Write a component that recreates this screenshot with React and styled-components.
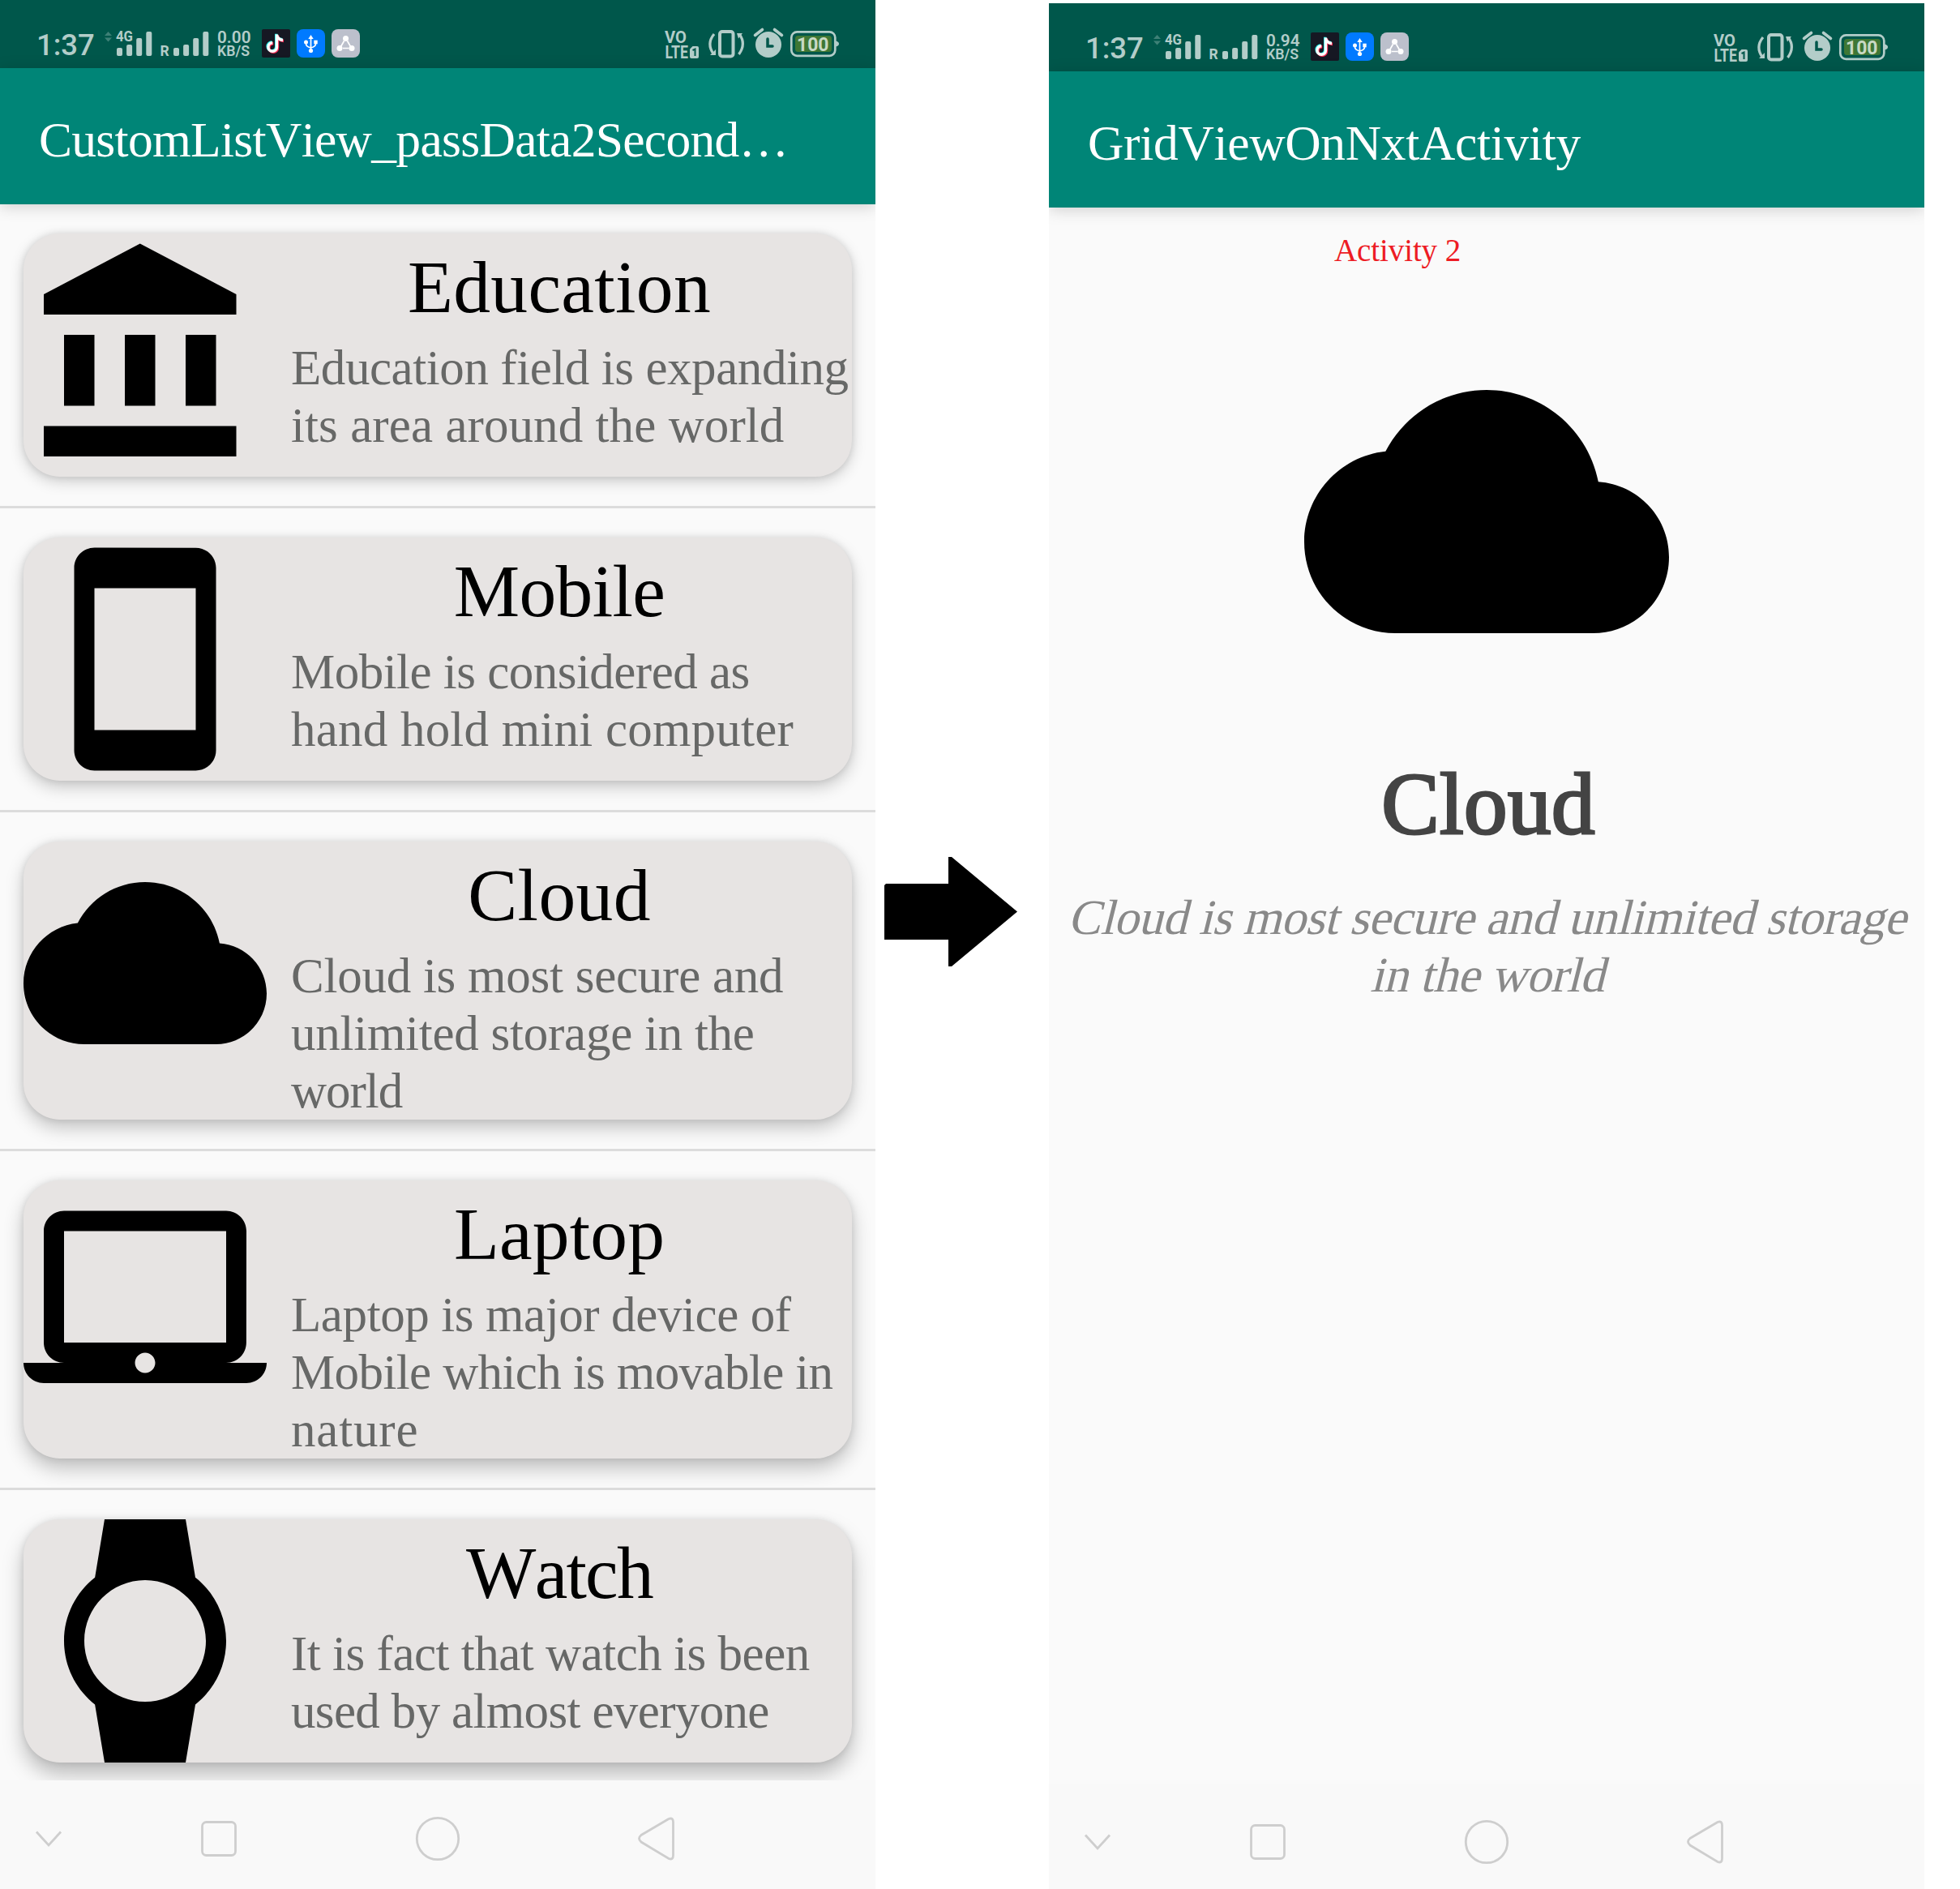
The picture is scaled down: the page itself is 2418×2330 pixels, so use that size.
import React, { useLayoutEffect, useRef, useState } from "react";
import styled, { createGlobalStyle } from "styled-components";

const GlobalStyle = createGlobalStyle`
  *, *::before, *::after { box-sizing: border-box; }
  html, body { margin: 0; padding: 0; background: #fff; }
  body { overflow: hidden; }
  svg { display: block; flex: none; }
`;

const serif = `"Liberation Serif", "Times New Roman", serif`;
const tint = "#b3cdc9";

const Board = styled.main`
  display: flex;
  width: 2418px;
  height: 2330px;
  overflow: hidden;
  background: #fff;
  font-family: ${serif};
`;

const Phone = styled.section`
  display: flex;
  flex-direction: column;
  flex: none;
  width: 1080px;
  height: 2330px;
  margin-top: ${(p) => p.$top || 0}px;
  background: #fafafa;
  overflow: hidden;
`;

const Between = styled.div`
  display: flex;
  flex: none;
  width: 214px;
  padding: 1056px 0 0 11px;
`;

const StatusBar = styled.header`
  display: flex;
  flex: none;
  align-items: flex-start;
  justify-content: space-between;
  height: 84px;
  padding: 30px 45px 0;
  background: #00574b;
  font-family: Roboto, sans-serif;
`;

const StatusGroup = styled.div`
  display: flex;
`;

const Clock = styled.div`
  width: 82px;
  padding-top: 5px;
  color: ${tint};
  font-size: 36.5px;
  font-weight: 500;
  line-height: 42px;
`;

const AppIcons = styled.div`
  display: flex;
  gap: 8px;
  margin-left: 12px;
  padding-top: 6px;
`;

const AppBadge = styled.div`
  width: 35px;
  height: 35px;
  border-radius: ${(p) => p.$radius}px;
  background: ${(p) => p.$color};
`;

const AppBar = styled.div`
  position: relative;
  z-index: 1;
  display: flex;
  flex: none;
  align-items: center;
  height: 168px;
  padding: 8px 48px 0;
  background: #008577;
  color: #fff;
  font-size: 61.5px;
  box-shadow: 0 3px 18px rgba(0, 0, 0, 0.17);
`;

const List = styled.div`
  display: flex;
  flex-direction: column;
  flex: none;
  height: 1944px;
  overflow: hidden;
`;

const ListItem = styled.div`
  flex: none;
  padding: 36px 29px;
  border-bottom: 3px solid #dcdcdc;
`;

const Card = styled.article`
  display: flex;
  min-height: 300px;
  border-radius: 45px;
  background: #e7e4e3;
  box-shadow:
    0 0 8px rgba(0, 0, 0, 0.1),
    0 ${(p) => p.$depth}px ${(p) => p.$depth + 12}px rgba(0, 0, 0, ${(p) => 0.12 + p.$depth * 0.01});
`;

const Picture = styled.svg`
  width: ${(p) => p.$size}px;
  height: ${(p) => p.$size}px;
  fill: #000;
`;

const CardText = styled.div`
  display: flex;
  flex-direction: column;
  flex: 1;
  min-width: 0;
  padding-top: 2px;
`;

const CardTitle = styled.h2`
  margin: 0;
  color: #000;
  font-size: 91.5px;
  font-weight: 400;
  line-height: 128px;
  text-align: center;
`;

const CardDescription = styled.p`
  display: flex;
  flex-direction: column;
  align-items: flex-start;
  margin: 0;
  padding-left: 30px;
  color: #676867;
  font-size: 61px;
  line-height: 71px;
`;

const NavBar = styled.nav`
  display: flex;
  flex: none;
  height: 134px;
  background: #f9f9f9;
`;

const Detail = styled.div`
  display: flex;
  flex-direction: column;
  align-items: center;
  flex: none;
  height: 1944px;
  padding-top: 31px;
`;

const DetailLabel = styled.div`
  align-self: flex-start;
  margin: 0 0 75px 352px;
  color: #ed1c24;
  font-size: 39px;
  line-height: 44px;
`;

const DetailTitle = styled.h1`
  margin: 71px 0 39px;
  padding-left: 4px;
  color: #444;
  font-size: 107px;
  font-weight: 400;
  line-height: 130px;
  -webkit-text-stroke: 3px #444;
`;

const DetailDescription = styled.p`
  display: flex;
  flex-direction: column;
  align-items: center;
  margin: 0;
  color: #898989;
  font-size: 61px;
  line-height: 71px;
`;

const Slanted = styled.span`
  display: block;
  transform: skewX(-14deg);
  transform-origin: 50% 79%;
`;

const Line = styled.span`
  display: inline-block;
  white-space: nowrap;
  font-kerning: none;
  font-variant-ligatures: none;
`;

/* Tracks a line of text so that it takes up the given width. */
function Fit({ width, children }) {
  const ref = useRef(null);
  const [spacing, setSpacing] = useState(0);
  useLayoutEffect(() => {
    const natural = ref.current.offsetWidth;
    setSpacing((width - natural) / children.length);
  }, [width, children]);
  return (
    <Line ref={ref} style={{ letterSpacing: `${spacing}px` }}>
      {children}
    </Line>
  );
}

const glyphs = {
  bank: "M4 10v7h3v-7H4zm6 0v7h3v-7h-3zM2 22h19v-3H2v3zm14-12v7h3v-7h-3zm-4.5-9L2 6v2h19V6l-9.5-5z",
  phone:
    "M17 1.01L7 1c-1.1 0-2 .9-2 2v18c0 1.1.9 2 2 2h10c1.1 0 2-.9 2-2V3c0-1.1-.9-1.99-2-1.99zM17 19H7V5h10v14z",
  cloud:
    "M19.35 10.04C18.67 6.59 15.64 4 12 4 9.11 4 6.6 5.64 5.35 8.04 2.34 8.36 0 10.91 0 14c0 3.31 2.69 6 6 6h13c2.76 0 5-2.24 5-5 0-2.64-2.05-4.78-4.65-4.96z",
  laptop:
    "M20 18c1.1 0 1.99-.9 1.99-2L22 5c0-1.1-.9-2-2-2H4c-1.1 0-2 .9-2 2v11c0 1.1.9 2 2 2H0c0 1.1.9 2 2 2h20c1.1 0 2-.9 2-2h-4zM4 5h16v11H4V5zm8 14c-.55 0-1-.45-1-1s.45-1 1-1 1 .45 1 1-.45 1-1 1z",
  watch:
    "M20 12c0-2.54-1.19-4.81-3.04-6.27L16 0H8l-.95 5.73C5.19 7.19 4 9.45 4 12s1.19 4.81 3.05 6.27L8 24h8l.96-5.73C18.81 16.81 20 14.54 20 12zM6 12c0-3.31 2.69-6 6-6s6 2.69 6 6-2.69 6-6 6-6-2.69-6-6z",
};

const items = [
  {
    icon: "bank", title: "Education", width: 374, depth: 6,
    lines: [["Education field is expanding", 688], ["its area around the world", 608]],
  },
  {
    icon: "phone", title: "Mobile", width: 260, depth: 8,
    lines: [["Mobile is considered as", 566], ["hand hold mini computer", 620]],
  },
  {
    icon: "cloud", title: "Cloud", width: 226, depth: 10,
    lines: [["Cloud is most secure and", 607], ["unlimited storage in the", 572], ["world", 137]],
  },
  {
    icon: "laptop", title: "Laptop", width: 260, depth: 12,
    lines: [["Laptop is major device of", 617], ["Mobile which is movable in", 668], ["nature", 157]],
  },
  {
    icon: "watch", title: "Watch", width: 230, depth: 14,
    lines: [["It is fact that watch is been", 640], ["used by almost everyone", 590]],
  },
];

function Glyph({ name, size }) {
  return (
    <Picture viewBox="0 0 24 24" $size={size}>
      <path d={glyphs[name]} />
    </Picture>
  );
}

/* Signal strengths of both SIMs and the current network speed. */
function Signals({ speed }) {
  const heights = [10, 14, 22, 30];
  return (
    <svg width="184" height="48" viewBox="127 30 184 48" fill={tint}>
      <path d="M129 44l4.500-5 4.500 5zM129 46.500h9l-4.500 5z" opacity="0.35" />
      <text x="143" y="51.300" fontSize="17.500" fontWeight="700" textLength="21" lengthAdjust="spacingAndGlyphs">4G</text>
      {heights.map((h, i) => (
        <rect key={i} x={144 + i * 12.1} y={69 - h} width="7" height={h} rx="2" />
      ))}
      <text x="197.500" y="68.700" fontSize="17.500" fontWeight="700">R</text>
      {heights.map((h, i) => (
        <rect key={i} x={214 + i * 12.1} y={69 - h} width="7" height={h} rx="2" />
      ))}
      <text x="268" y="52.700" fontSize="20.500" fontWeight="600" textLength="41.500" lengthAdjust="spacingAndGlyphs">{speed}</text>
      <text x="268" y="68.900" fontSize="18" fontWeight="600" textLength="40" lengthAdjust="spacingAndGlyphs">KB/S</text>
    </svg>
  );
}

function Indicators() {
  return (
    <svg width="217" height="48" viewBox="818 30 217 48" fill={tint}>
      <text x="820" y="53" fontSize="21" fontWeight="700" textLength="27" lengthAdjust="spacingAndGlyphs">VO</text>
      <text x="820.500" y="71.500" fontSize="21.500" fontWeight="700" textLength="28.500" lengthAdjust="spacingAndGlyphs">LTE</text>
      <path d="M854.500 57H860a2 2 0 0 1 2 2v11a2 2 0 0 1-2 2h-7a2 2 0 0 1-2-2v-9.500z" />
      <path d="M854.500 62l3-1.500V69" fill="none" stroke="#00574b" strokeWidth="2" />
      <rect x="888" y="39" width="16.500" height="30.500" rx="3" fill="none" stroke={tint} strokeWidth="4" />
      <g fill="none" stroke={tint} strokeWidth="3.200">
        <path d="M881 42Q871 54 880.500 67" />
        <path d="M911.500 67Q921 54 912 42" />
      </g>
      <path d="M876 68h7v-7zM909 41h7l-5 6.500z" />
      <circle cx="948" cy="55" r="16" />
      <path d="M931.500 43.500L940.500 36.500M964.500 43.500L955.500 36.500" stroke={tint} strokeWidth="3.600" strokeLinecap="round" />
      <path d="M947 48v9h6" fill="none" stroke="#00574b" strokeWidth="3.500" strokeLinecap="round" />
      <rect x="976.300" y="39.300" width="54" height="29.500" rx="7" fill="none" stroke={tint} strokeWidth="2.700" />
      <path d="M1031 50.500q4 1 4 3.500t-4 3.500z" />
      <rect x="981" y="44" width="45" height="20" rx="3.500" fill="#3f7735" />
      <text x="983" y="62.800" fontSize="24" fontWeight="700" fill="#c8d9c4" textLength="39.500" lengthAdjust="spacingAndGlyphs">100</text>
    </svg>
  );
}

const note = "M18.500 6.500V22a5.300 5.300 0 1 1-5.300-5.300M18.500 7q1 6 7.500 6.500";

function Status({ speed }) {
  return (
    <StatusBar>
      <StatusGroup>
        <Clock>1:37</Clock>
        <Signals speed={speed} />
        <AppIcons>
          <AppBadge $color="#161823" $radius={2}>
            <svg width="35" height="35" fill="none" strokeWidth="3.400">
              <path d={note} stroke="#25f4ee" transform="translate(-.8 -.7)" />
              <path d={note} stroke="#fe2c55" transform="translate(1 1)" />
              <path d={note} stroke="#fff" />
            </svg>
          </AppBadge>
          <AppBadge $color="#007aff" $radius={8}>
            <svg width="35" height="35" fill="#fff">
              <path d="M17.500 10v16M11.500 16.500v1.500q0 3.500 6 5 6-1.500 6-5v-1.500" fill="none" stroke="#fff" strokeWidth="1.700" />
              <path d="M14.300 12l3.200-5 3.200 5z" />
              <circle cx="11.500" cy="16" r="2.500" />
              <rect x="21.300" y="13.700" width="4.400" height="4.600" />
              <circle cx="17.500" cy="26.500" r="2.600" />
            </svg>
          </AppBadge>
          <AppBadge $color="#bcc0cc" $radius={8}>
            <svg width="35" height="35" fill="#fff">
              <path d="M15.500 14.500l-4 7M19.500 14.500l4 7M14 23.500h7.500" stroke="#fff" strokeWidth="1.700" />
              <circle cx="17.500" cy="11.500" r="3.500" />
              <circle cx="10" cy="23.500" r="3.500" />
              <circle cx="25" cy="23.500" r="3.500" />
            </svg>
          </AppBadge>
        </AppIcons>
      </StatusGroup>
      <Indicators />
    </StatusBar>
  );
}

function SystemNav() {
  return (
    <NavBar>
      <svg width="1080" height="134" fill="none" stroke="#cecece" strokeWidth="2.800">
        <path d="M45 63.500L60 80 75 63.500" />
        <rect x="249.500" y="51.500" width="41" height="41" rx="5" />
        <circle cx="540" cy="72" r="25.700" />
        <path d="M825 47.500L791 67.500q-5 4 0 8.500L825 96.500q5.500 2 5.500-4V51.500q0-6-5.500-4z" />
      </svg>
    </NavBar>
  );
}

export default function App() {
  return (
    <>
      <GlobalStyle />
      <Board>
        <Phone>
          <Status speed="0.00" />
          <AppBar>
            <Fit width={924}>CustomListView_passData2Second…</Fit>
          </AppBar>
          <List>
            {items.map((item) => (
              <ListItem key={item.title}>
                <Card $depth={item.depth}>
                  <Glyph name={item.icon} size={300} />
                  <CardText>
                    <CardTitle>
                      <Fit width={item.width}>{item.title}</Fit>
                    </CardTitle>
                    <CardDescription>
                      {item.lines.map(([text, width]) => (
                        <Fit key={text} width={width}>{text}</Fit>
                      ))}
                    </CardDescription>
                  </CardText>
                </Card>
              </ListItem>
            ))}
          </List>
          <SystemNav />
        </Phone>
        <Between>
          <svg width="166" height="137">
            <path d="M2 34h77V1h4l81 67.500L83 136h-4v-33H0V36z" />
          </svg>
        </Between>
        <Phone $top={4}>
          <Status speed="0.94" />
          <AppBar>
            <Fit width={608}>GridViewOnNxtActivity</Fit>
          </AppBar>
          <Detail>
            <DetailLabel>
              <Fit width={156}>Activity 2</Fit>
            </DetailLabel>
            <Glyph name="cloud" size={450} />
            <DetailTitle>
              <Fit width={264}>Cloud</Fit>
            </DetailTitle>
            <DetailDescription>
              <Slanted>
                <Fit width={1034}>Cloud is most secure and unlimited storage</Fit>
              </Slanted>
              <Slanted>
                <Fit width={289}>in the world</Fit>
              </Slanted>
            </DetailDescription>
          </Detail>
          <SystemNav />
        </Phone>
      </Board>
    </>
  );
}
